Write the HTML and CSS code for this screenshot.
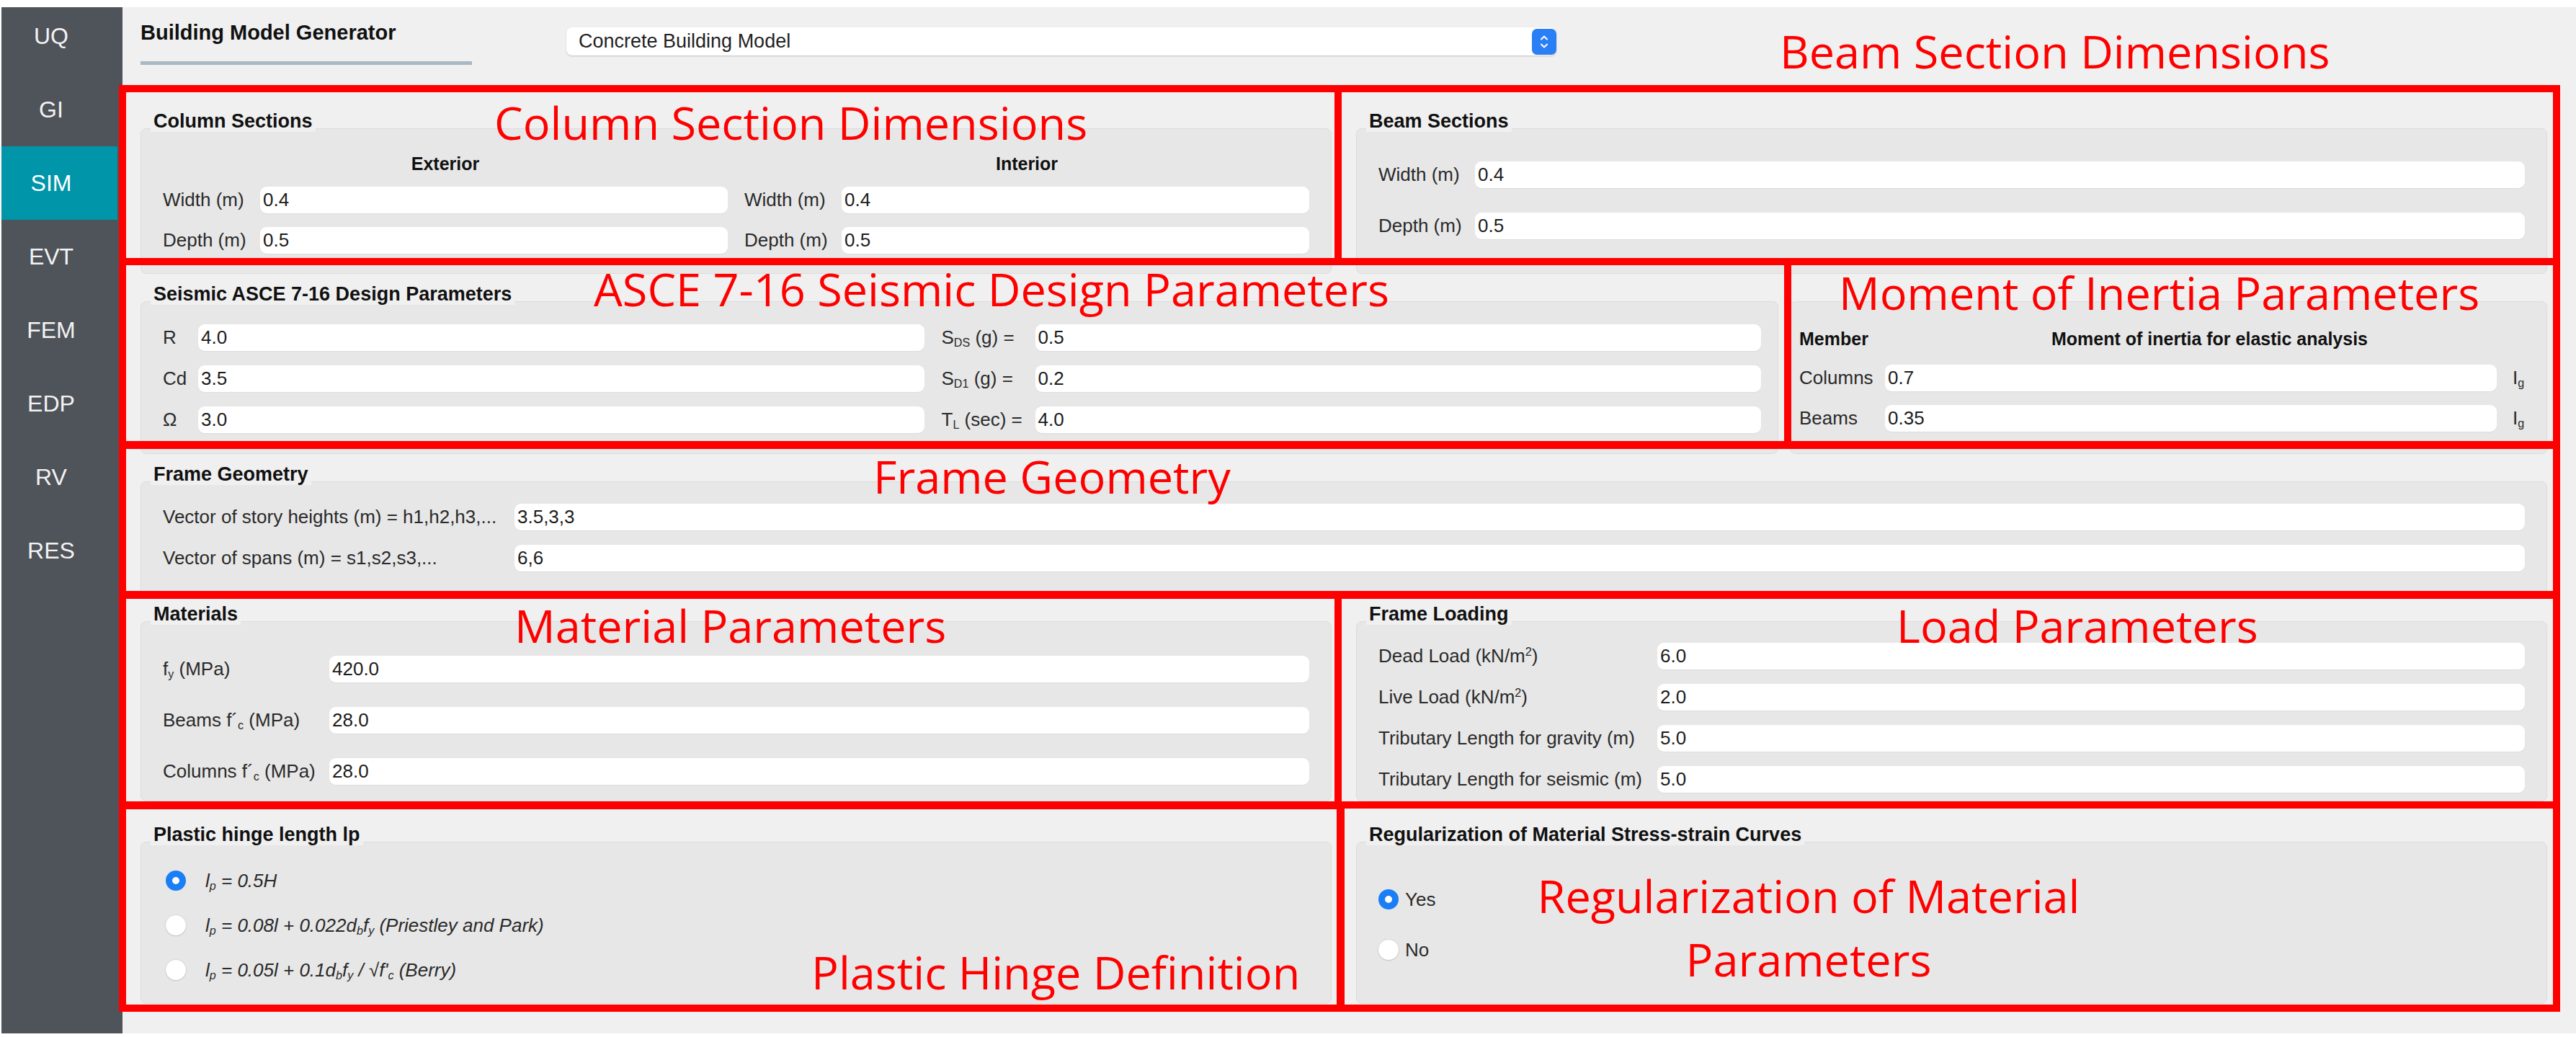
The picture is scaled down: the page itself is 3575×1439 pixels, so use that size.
FILE: index.html
```html
<!DOCTYPE html>
<html lang="en">
<head>
<meta charset="utf-8">
<title>Building Model Generator</title>
<link rel="stylesheet" href="styles.css">
</head>
<body>
<div class="app">
  <nav class="sidebar">
    <ul class="nav">
      <li class="nav-item">UQ</li>
      <li class="nav-item">GI</li>
      <li class="nav-item is-active">SIM</li>
      <li class="nav-item">EVT</li>
      <li class="nav-item">FEM</li>
      <li class="nav-item">EDP</li>
      <li class="nav-item">RV</li>
      <li class="nav-item">RES</li>
    </ul>
  </nav>

  <main class="main">
    <header class="header">
      <div class="brand">
        <div class="brand-title">Building Model Generator</div>
        <div class="brand-bar"></div>
      </div>
      <div class="model-select">
        <span class="model-select-text">Concrete Building Model</span>
        <span class="model-select-btn">
          <svg width="14" height="26" viewBox="0 0 14 26"><path d="M3 9.5 L7 5.5 L11 9.5 M3 16.5 L7 20.5 L11 16.5" fill="none" stroke="#fff" stroke-width="2" stroke-linecap="round" stroke-linejoin="round"/></svg>
        </span>
      </div>
    </header>

    <section class="row row-1">
      <div class="group">
        <div class="group-title"><span>Column Sections</span></div>
        <div class="panel panel-columns">
          <div class="col-head">Exterior</div>
          <div class="col-head">Interior</div>
          <div class="lbl">Width (m)</div><div class="field">0.4</div>
          <div class="lbl">Width (m)</div><div class="field">0.4</div>
          <div class="lbl">Depth (m)</div><div class="field">0.5</div>
          <div class="lbl">Depth (m)</div><div class="field">0.5</div>
        </div>
      </div>
      <div class="group">
        <div class="group-title"><span>Beam Sections</span></div>
        <div class="panel panel-beam">
          <div class="lbl">Width (m)</div><div class="field">0.4</div>
          <div class="lbl">Depth (m)</div><div class="field">0.5</div>
        </div>
      </div>
    </section>

    <section class="row row-2">
      <div class="group">
        <div class="group-title"><span>Seismic ASCE 7-16 Design Parameters</span></div>
        <div class="panel panel-seismic">
          <div class="lbl">R</div><div class="field">4.0</div>
          <div class="lbl lbl-right">S<sub>DS</sub> (g) =</div><div class="field">0.5</div>
          <div class="lbl">Cd</div><div class="field">3.5</div>
          <div class="lbl lbl-right">S<sub>D1</sub> (g) =</div><div class="field">0.2</div>
          <div class="lbl">Ω</div><div class="field">3.0</div>
          <div class="lbl lbl-right">T<sub>L</sub> (sec) =</div><div class="field">4.0</div>
        </div>
      </div>
      <div class="group">
        <div class="group-title"></div>
        <div class="panel panel-moment">
          <div class="col-head col-head-left">Member</div>
          <div class="col-head col-head-wide">Moment of inertia for elastic analysis</div>
          <div class="lbl">Columns</div><div class="field">0.7</div><div class="lbl unit">I<sub>g</sub></div>
          <div class="lbl">Beams</div><div class="field">0.35</div><div class="lbl unit">I<sub>g</sub></div>
        </div>
      </div>
    </section>

    <section class="row row-3">
      <div class="group">
        <div class="group-title"><span>Frame Geometry</span></div>
        <div class="panel panel-frame">
          <div class="lbl">Vector of story heights (m) = h1,h2,h3,...</div><div class="field">3.5,3,3</div>
          <div class="lbl">Vector of spans (m) = s1,s2,s3,...</div><div class="field">6,6</div>
        </div>
      </div>
    </section>

    <section class="row row-4">
      <div class="group">
        <div class="group-title"><span>Materials</span></div>
        <div class="panel panel-materials">
          <div class="lbl">f<sub>y</sub> (MPa)</div><div class="field">420.0</div>
          <div class="lbl">Beams f´<sub>c</sub> (MPa)</div><div class="field">28.0</div>
          <div class="lbl">Columns f´<sub>c</sub> (MPa)</div><div class="field">28.0</div>
        </div>
      </div>
      <div class="group">
        <div class="group-title"><span>Frame Loading</span></div>
        <div class="panel panel-loading">
          <div class="lbl">Dead Load (kN/m<sup>2</sup>)</div><div class="field">6.0</div>
          <div class="lbl">Live Load (kN/m<sup>2</sup>)</div><div class="field">2.0</div>
          <div class="lbl">Tributary Length for gravity (m)</div><div class="field">5.0</div>
          <div class="lbl">Tributary Length for seismic (m)</div><div class="field">5.0</div>
        </div>
      </div>
    </section>

    <section class="row row-5">
      <div class="group">
        <div class="group-title"><span>Plastic hinge length lp</span></div>
        <div class="panel panel-plastic">
          <div class="radio-row"><span class="radio is-on"></span><span class="formula">l<sub>p</sub> = 0.5H</span></div>
          <div class="radio-row"><span class="radio"></span><span class="formula">l<sub>p</sub> = 0.08l + 0.022d<sub>b</sub>f<sub>y</sub> (Priestley and Park)</span></div>
          <div class="radio-row"><span class="radio"></span><span class="formula">l<sub>p</sub> = 0.05l + 0.1d<sub>b</sub>f<sub>y</sub> / √f'<sub>c</sub> (Berry)</span></div>
        </div>
      </div>
      <div class="group">
        <div class="group-title"><span>Regularization of Material Stress-strain Curves</span></div>
        <div class="panel panel-reg">
          <div class="radio-row radio-row-tight"><span class="radio is-on"></span><span class="lbl">Yes</span></div>
          <div class="radio-row radio-row-tight"><span class="radio"></span><span class="lbl">No</span></div>
        </div>
      </div>
    </section>
  </main>
</div>

<div class="overlay">
  <div class="mark mark-column"></div>
  <div class="mark mark-beam"></div>
  <div class="mark mark-seismic"></div>
  <div class="mark mark-moment"></div>
  <div class="mark mark-frame"></div>
  <div class="mark mark-material"></div>
  <div class="mark mark-load"></div>
  <div class="mark mark-hinge"></div>
  <div class="mark mark-reg"></div>

  <div class="note note-column">Column Section Dimensions</div>
  <div class="note note-beam">Beam Section Dimensions</div>
  <div class="note note-seismic">ASCE 7-16 Seismic Design Parameters</div>
  <div class="note note-moment">Moment of Inertia Parameters</div>
  <div class="note note-frame">Frame Geometry</div>
  <div class="note note-material">Material Parameters</div>
  <div class="note note-load">Load Parameters</div>
  <div class="note note-hinge">Plastic Hinge Definition</div>
  <div class="note note-reg">Regularization of Material<br>Parameters</div>
</div>
</body>
</html>
```

FILE: styles.css
```css
* { box-sizing: border-box; }

html, body { margin: 0; padding: 0; }

body {
  width: 3575px;
  height: 1439px;
  position: relative;
  overflow: hidden;
  background: #ffffff;
  font-family: "Liberation Sans", Arial, sans-serif;
  color: #222;
}

.app {
  display: flex;
  margin: 10px 0 0 2px;
  height: 1424px;
}

/* ---------- sidebar ---------- */
.sidebar {
  width: 168px;
  flex: none;
  background: #4f535a;
  overflow: hidden;
}

.nav {
  list-style: none;
  margin: -11px 0 0;
  padding: 0;
}

.nav-item {
  width: 161px;
  height: 102px;
  line-height: 102px;
  padding-right: 23px;
  text-align: center;
  font-size: 32px;
  color: #f3f3f3;
}

.nav-item.is-active {
  background: #0095a8;
  color: #ffffff;
}

/* ---------- main ---------- */
.main {
  flex: 1;
  background: #f0f0f0;
  padding: 0 40px 0 25px;
}

.header {
  display: flex;
  align-items: flex-start;
  height: 143px;
  padding-top: 18px;
}

.brand { width: 460px; flex: none; }

.brand-title {
  font-size: 29px;
  font-weight: bold;
  line-height: 34px;
  color: #111;
}

.brand-bar {
  margin-top: 23px;
  height: 5px;
  background: #a9b8c3;
}

.model-select {
  margin: 10px 0 0 131px;
  width: 1374px;
  height: 39px;
  background: #ffffff;
  border-radius: 8px;
  box-shadow: 0 1px 2px rgba(0, 0, 0, 0.2);
  display: flex;
  align-items: center;
  padding-left: 17px;
  font-size: 27px;
  color: #222;
}

.model-select-btn {
  margin-left: auto;
  width: 34px;
  height: 36px;
  background: #2a7ef6;
  border-radius: 7px;
  display: flex;
  align-items: center;
  justify-content: center;
}

/* ---------- rows ---------- */
.row {
  display: grid;
  column-gap: 34px;
}

.row-1 { grid-template-columns: 1fr 1fr; }
.row-2 { grid-template-columns: 2273px 1fr; column-gap: 16px; margin-top: 13px; }
.row-3 { grid-template-columns: 1fr; margin-top: 13px; }
.row-4 { grid-template-columns: 1fr 1fr; margin-top: 7px; }
.row-5 { grid-template-columns: 1fr 1fr; margin-top: 31px; }

.group-title {
  height: 30px;
  line-height: 30px;
  margin-bottom: -5px;
  position: relative;
  z-index: 1;
}

.group-title span {
  display: inline-block;
  height: 30px;
  margin-left: 14px;
  padding: 0 4px;
  background: #f0f0f0;
  font-size: 27px;
  font-weight: bold;
  color: #111;
}

.panel {
  background: #e7e7e7;
  border: 1px solid #dcdcdc;
  border-radius: 8px;
  padding-left: 30px;
  padding-right: 30px;
  display: grid;
  align-items: center;
  align-content: start;
}

.lbl {
  font-size: 26px;
  color: #2a2a2a;
  white-space: nowrap;
}

.lbl-right { padding-left: 8px; }

.field {
  height: 37px;
  line-height: 37px;
  background: #ffffff;
  border-radius: 9px;
  padding-left: 4px;
  font-size: 26px;
  color: #1c1c1c;
  box-shadow: 0 1px 1px rgba(0, 0, 0, 0.05);
}

.col-head {
  grid-column: span 2;
  text-align: center;
  font-size: 25px;
  font-weight: bold;
  color: #111;
}

.col-head-left { grid-column: span 1; text-align: left; }

sub, sup {
  font-size: 0.62em;
  line-height: 0;
  position: relative;
}

sub { vertical-align: baseline; top: 0.25em; }
sup { vertical-align: baseline; top: -0.55em; }

/* column sections */
.panel-columns {
  height: 202px;
  padding-top: 35px;
  grid-template-columns: 112px 1fr 112px 1fr;
  grid-template-rows: 26px 37px 37px;
  column-gap: 23px;
  row-gap: 19px;
}

/* beam sections */
.panel-beam {
  height: 202px;
  padding-top: 45px;
  grid-template-columns: 112px 1fr;
  grid-template-rows: 37px 37px;
  column-gap: 22px;
  row-gap: 34px;
}

/* seismic */
.panel-seismic {
  height: 212px;
  padding-top: 31px;
  padding-right: 23px;
  grid-template-columns: 33px 1fr 122px 1fr;
  grid-template-rows: repeat(3, 37px);
  column-gap: 16px;
  row-gap: 20px;
}

/* moment of inertia */
.panel-moment {
  height: 212px;
  padding: 35px 17px 0 12px;
  grid-template-columns: 103px 1fr 36px;
  grid-template-rows: 33px 37px 37px;
  column-gap: 16px;
  row-gap: 19px;
}

.col-head-wide { grid-column: 2 / 4; }

.unit { padding-left: 6px; }

/* frame geometry */
.panel-frame {
  height: 162px;
  padding-top: 30px;
  grid-template-columns: 470px 1fr;
  grid-template-rows: 37px 37px;
  column-gap: 18px;
  row-gap: 20px;
}

/* materials */
.panel-materials {
  height: 250px;
  padding-top: 47px;
  grid-template-columns: 212px 1fr;
  grid-template-rows: repeat(3, 37px);
  column-gap: 19px;
  row-gap: 34px;
}

/* frame loading */
.panel-loading {
  height: 250px;
  padding-top: 29px;
  grid-template-columns: 368px 1fr;
  grid-template-rows: repeat(4, 37px);
  column-gap: 19px;
  row-gap: 20px;
}

/* plastic hinge */
.panel-plastic {
  height: 225px;
  padding-top: 33px;
  padding-left: 34px;
  grid-template-rows: repeat(3, 40px);
  row-gap: 22px;
}

.panel-reg {
  height: 225px;
  padding-top: 59px;
  grid-template-rows: repeat(2, 40px);
  row-gap: 30px;
}

.radio-row {
  display: flex;
  align-items: center;
  gap: 27px;
  height: 40px;
}

.radio-row-tight { gap: 9px; }

.radio {
  flex: none;
  width: 28px;
  height: 28px;
  border-radius: 50%;
  background: #ffffff;
  box-shadow: 0 0 0 1px rgba(0, 0, 0, 0.06), 0 1px 2px rgba(0, 0, 0, 0.12);
}

.radio.is-on {
  border: 9px solid #1a7ef6;
  box-shadow: none;
}

.formula {
  font-size: 26px;
  font-style: italic;
  color: #2a2a2a;
  white-space: nowrap;
}

/* ---------- annotation overlay ---------- */
.overlay {
  position: absolute;
  top: 0;
  left: 0;
  width: 3575px;
  height: 1439px;
  pointer-events: none;
}

.mark {
  position: absolute;
  border: 10px solid #ff0000;
}

.mark-column   { left: 165px;  top: 118px;  width: 1697px; height: 250px; }
.mark-beam     { left: 1852px; top: 118px;  width: 1701px; height: 250px; }
.mark-seismic  { left: 165px;  top: 358px;  width: 2321px; height: 265px; }
.mark-moment   { left: 2476px; top: 358px;  width: 1077px; height: 265px; }
.mark-frame    { left: 165px;  top: 612px;  width: 3388px; height: 219px; }
.mark-material { left: 165px;  top: 820px;  width: 1697px; height: 303px; }
.mark-load     { left: 1852px; top: 820px;  width: 1701px; height: 302px; }
.mark-hinge    { left: 165px;  top: 1112px; width: 1701px; height: 292px; }
.mark-reg      { left: 1855px; top: 1112px; width: 1698px; height: 292px; }

.note {
  position: absolute;
  font-family: "Open Sans", sans-serif;
  font-size: 63px;
  line-height: 63px;
  color: #ff0000;
  white-space: nowrap;
}

.note-column   { left: 686px;  top: 138px; }
.note-beam     { left: 2470px; top: 39px; }
.note-seismic  { left: 824px;  top: 369px; }
.note-moment   { left: 2552px; top: 374px; }
.note-frame    { left: 1212px; top: 629px; }
.note-material { left: 714px;  top: 836px; }
.note-load     { left: 2632px; top: 836px; }
.note-hinge    { left: 1126px; top: 1317px; }
.note-reg {
  left: 2060px;
  top: 1199px;
  width: 900px;
  line-height: 88px;
  text-align: center;
}
```
